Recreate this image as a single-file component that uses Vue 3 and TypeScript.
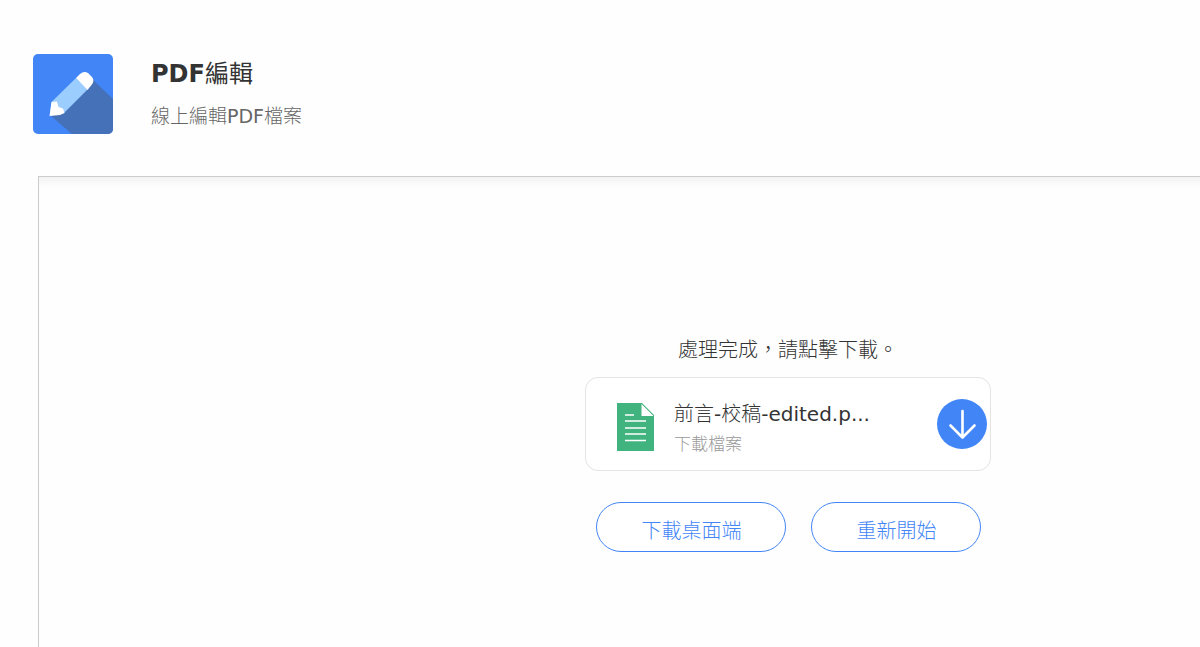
<script setup lang="ts">
import { ref } from 'vue'

interface Action {
  id: string
  label: string
  wide: boolean
}

const fileName = ref('前言-校稿-edited.p...')
const actions: Action[] = [
  { id: 'desktop', label: '下載桌面端', wide: true },
  { id: 'restart', label: '重新開始', wide: false },
]
</script>

<template>
  <div class="page">
    <header class="header">
      <svg class="logo" viewBox="0 0 80 80" aria-hidden="true">
        <defs>
          <clipPath id="tile"><rect width="80" height="80" rx="5" /></clipPath>
        </defs>
        <g clip-path="url(#tile)">
          <rect width="80" height="80" fill="#4285f6" />
          <path d="M59 25L80 45V80H39L17 61Z" fill="#4571b8" />
          <path d="M43 24L54.500 35.500L31 59L17 61L18.500 48Z" fill="#9bcdff" />
          <path d="M43 24L47 20Q51 16.500 55 19L59 23Q62 27 58.500 31L54.500 36Z" fill="#fff" />
          <path d="M18.500 48L24 47.500L25.500 53L30 54.500L31.500 59L27 61L16.500 62Z" fill="#fff" />
        </g>
      </svg>
      <div class="heading">
        <h1 class="title"><strong>PDF</strong>編輯</h1>
        <p class="subtitle">線上編輯PDF檔案</p>
      </div>
    </header>

    <main class="panel">
      <p class="status">處理完成，請點擊下載。</p>
      <section class="card">
        <svg class="file-icon" viewBox="0 0 37 48" aria-hidden="true">
          <path d="M0 0H25L37 12V48H0Z" fill="#40b37f" />
          <path d="M24.500 1V13H36.500Z" fill="#fff" />
          <path d="M8 12H17M8 18H29M8 25H29M8 31H29M8 37.500H29" stroke="#fff" stroke-width="1.700" fill="none" />
        </svg>
        <div class="file-text">
          <span class="file-name">{{ fileName }}</span>
          <span class="file-hint">下載檔案</span>
        </div>
        <button class="download" type="button" aria-label="下載檔案">
          <svg viewBox="0 0 50 50" aria-hidden="true">
            <path d="M25.500 12V38M13.500 26.500L25.500 38.500L37.500 26.500" fill="none" stroke="#fff" stroke-width="2.600" stroke-linecap="round" stroke-linejoin="round" />
          </svg>
        </button>
      </section>
      <div class="actions">
        <button
          v-for="action in actions"
          :key="action.id"
          type="button"
          class="action"
          :class="{ wide: action.wide }"
        >{{ action.label }}</button>
      </div>
    </main>
  </div>
</template>

<style>
body {
  margin: 0;
  background: #fefefe;
}
</style>

<style scoped>
.page {
  display: flex;
  flex-direction: column;
  box-sizing: border-box;
  min-height: 100vh;
  overflow: hidden;
  padding-top: 54px;
  font-family: "DejaVu Sans", "Noto Sans CJK TC Light", "Noto Sans CJK TC", sans-serif;
  font-weight: 400;
  color: #333;
}

.header {
  display: flex;
  gap: 38px;
  height: 80px;
  margin: 0 33px 42px;
}

.logo {
  width: 80px;
  height: 80px;
}

.title,
.subtitle,
.status {
  margin: 0;
  white-space: nowrap;
}

.title {
  margin-top: 4px;
  font-family: "DejaVu Sans", "Noto Sans CJK TC", sans-serif;
  font-size: 24px;
  font-weight: 400;
  line-height: 32px;
}

.title strong {
  font-weight: 700;
}

.subtitle {
  margin-top: 12px;
  font-size: 19px;
  line-height: 28px;
  color: #666;
}

.panel {
  display: flex;
  flex: 1;
  flex-direction: column;
  align-items: center;
  box-sizing: border-box;
  width: 125vw;
  margin-left: 38px;
  padding-top: 158px;
  border: 1px solid #ccc;
  border-bottom: 0;
  box-shadow: inset 0 10px 10px -6px rgba(0, 0, 0, 0.06);
}

.status {
  font-size: 20px;
  line-height: 30px;
}

.card {
  display: flex;
  align-items: center;
  box-sizing: border-box;
  width: 406px;
  height: 94px;
  margin-top: 12px;
  padding: 0 3px 0 31px;
  border: 1px solid #e4e4e4;
  border-radius: 13px;
  background: #fff;
}

.file-icon {
  flex: none;
  width: 37px;
  height: 48px;
  margin-top: 6px;
}

.file-text {
  display: flex;
  flex: 1;
  flex-direction: column;
  margin-left: 20px;
  padding-top: 7px;
  white-space: nowrap;
}

.file-name {
  font-size: 20px;
  line-height: 32px;
}

.file-hint {
  font-size: 17px;
  line-height: 28px;
  color: #999;
}

.download {
  flex: none;
  width: 50px;
  height: 50px;
  padding: 0;
  border: 0;
  border-radius: 50%;
  background: #4285f6;
  cursor: pointer;
}

.download svg {
  display: block;
}

.actions {
  display: flex;
  gap: 25px;
  margin-top: 31px;
}

.action {
  box-sizing: border-box;
  width: 170px;
  height: 50px;
  padding: 5px 0 0 2px;
  border: 1px solid #4285f6;
  border-radius: 25px;
  background: #fff;
  font: inherit;
  font-size: 20px;
  color: #4285f6;
  cursor: pointer;
}

.action.wide {
  width: 190px;
}
</style>
